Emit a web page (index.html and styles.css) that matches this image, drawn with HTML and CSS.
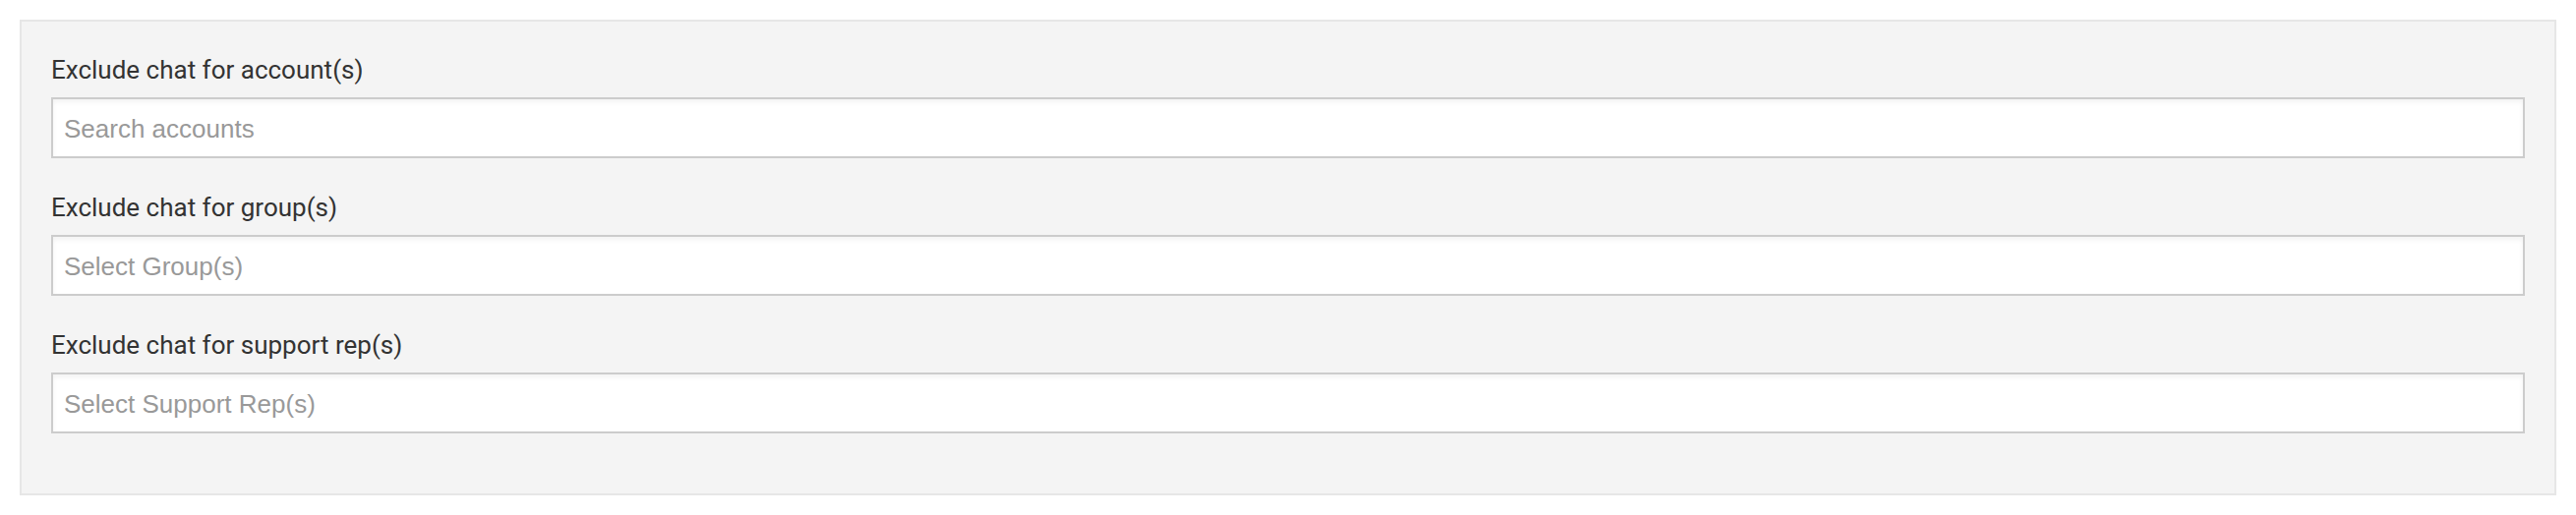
FILE: index.html
```html
<!DOCTYPE html>
<html lang="en">
<head>
    <meta charset="UTF-8">
    <meta name="viewport" content="width=device-width, initial-scale=1.0">
    <title>Chat Exclusions</title>
    <link rel="stylesheet" href="styles.css">
</head>
<body>
    <div class="panel">
        <div class="field">
            <label class="field-label">Exclude chat for account(s)</label>
            <div class="select-box">
                <div class="select-placeholder">Search accounts</div>
            </div>
        </div>

        <div class="field">
            <label class="field-label">Exclude chat for group(s)</label>
            <div class="select-box">
                <div class="select-placeholder">Select Group(s)</div>
            </div>
        </div>

        <div class="field">
            <label class="field-label">Exclude chat for support rep(s)</label>
            <div class="select-box">
                <div class="select-placeholder">Select Support Rep(s)</div>
            </div>
        </div>
    </div>
</body>
</html>
```

FILE: styles.css
```css
body {
    margin: 0;
    padding: 20px;
    background-color: #fff;
    font-family: Roboto, "Liberation Sans", Arial, sans-serif;
}

.panel {
    background-color: #f4f4f4;
    border: 2px solid #e6e6e6;
    padding: 34px 30px 25px 30px;
    height: 484px;
    box-sizing: border-box;
}

.field {
    margin-bottom: 35px;
}

.field-label {
    display: block;
    font-size: 26px;
    line-height: 30px;
    color: #333;
    margin-bottom: 13px;
}

.select-box {
    height: 62px;
    box-sizing: border-box;
    background-color: #fff;
    border: 2px solid #cccccc;
    box-shadow: inset 0 3px 5px rgba(0, 0, 0, 0.05);
    padding: 2px 11px 0 11px;
}

.select-placeholder {
    font-family: "Liberation Sans", Arial, sans-serif;
    font-size: 26px;
    line-height: 56px;
    color: #999;
}
```
